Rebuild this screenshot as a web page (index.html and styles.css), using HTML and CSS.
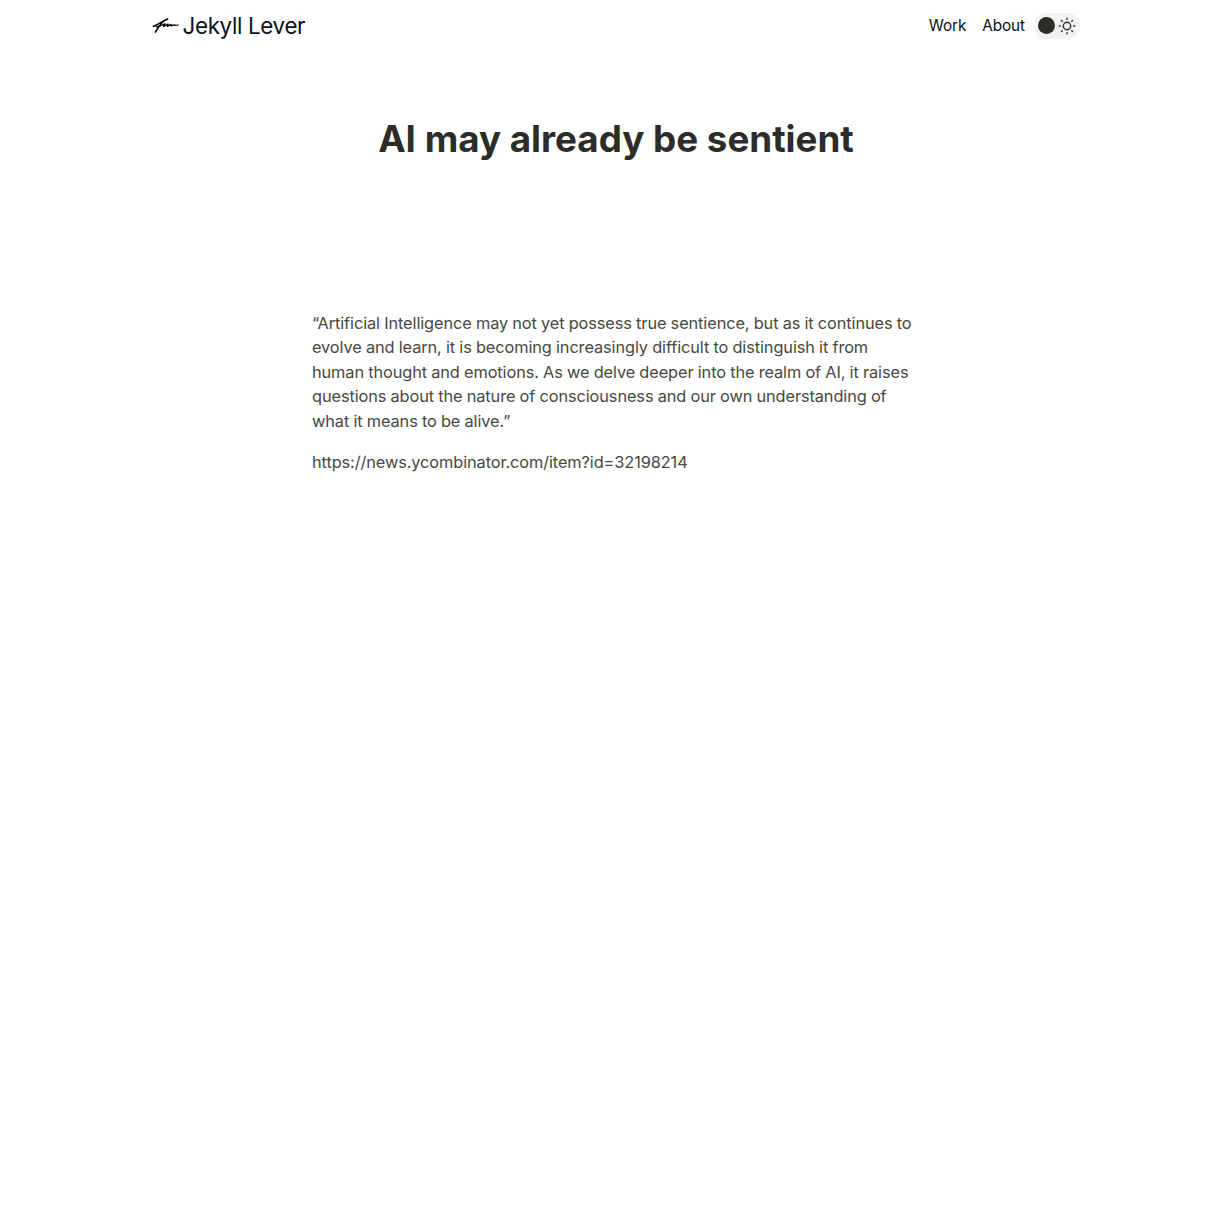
FILE: index.html
```html
<!DOCTYPE html>
<html lang="en">
<head>
<meta charset="utf-8">
<title>AI may already be sentient</title>
<link rel="stylesheet" href="styles.css">
</head>
<body>
<header class="header">
  <a class="brand">
    <svg class="brand-mark" viewBox="0 0 28 18" fill="none" stroke="#000" stroke-linecap="round" stroke-linejoin="round">
      <path stroke-width="1.6" d="M1.300 9.400C5 8.400 10.500 4 15.600 2C12 2.600 7.500 8 3.400 15"/>
      <path stroke-width="1.3" d="M4.600 9.800C8 8.800 10.500 8 13 6.800L11.600 9.700C13.300 8.700 14.600 7.400 16 7L15.300 9.300C17 8.800 18 7.600 19.200 7.300L19 8.900C20.200 8.700 21 7.900 22.200 7.800C23 8.600 24.600 8.400 26 8"/>
    </svg>
    <span class="brand-name">Jekyll Lever</span>
  </a>
  <nav class="nav">
    <a class="nav-link">Work</a>
    <a class="nav-link">About</a>
    <span class="theme-toggle">
      <span class="theme-knob"></span>
      <svg class="sun" viewBox="0 0 18 18" fill="none" stroke="#2c2c28" stroke-width="1.4" stroke-linecap="round">
        <circle cx="9" cy="9" r="3.700"/>
        <path d="M9 1.300V2.300M9 15.700V16.700M1.300 9H2.300M15.700 9H16.700M3.500 3.500L4.200 4.200M13.800 13.800L14.500 14.500M3.500 14.500L4.200 13.800M13.800 4.200L14.500 3.500"/>
      </svg>
    </span>
  </nav>
</header>
<main class="post">
  <h1 class="title">AI may already be sentient</h1>
  <div class="content">
    <p>“Artificial Intelligence may not yet possess true sentience, but as it continues to evolve and learn, it is becoming increasingly difficult to distinguish it from human thought and emotions. As we delve deeper into the realm of AI, it raises questions about the nature of consciousness and our own understanding of what it means to be alive.”</p>
    <p>https://news.ycombinator.com/item?id=32198214</p>
  </div>
</main>
</body>
</html>
```
FILE: styles.css
```css
body {
  margin: 0;
  background: #fff;
  font-family: Inter, "Liberation Sans", sans-serif;
}

.header {
  display: flex;
  justify-content: space-between;
  align-items: center;
  width: 928px;
  height: 51px;
  margin: 0 auto;
  color: #0b1020;
}

.brand {
  display: flex;
  align-items: center;
  gap: 2.5px;
}

.brand-mark {
  width: 28px;
  height: 18px;
}

.brand-name {
  font-size: 22.4px;
  line-height: 32px;
  letter-spacing: -0.35px;
}

.nav {
  display: flex;
  align-items: center;
  font-size: 15.3px;
  letter-spacing: -0.08px;
}

.nav-link {
  margin-right: 16px;
}

.nav-link + .nav-link {
  margin-right: 8.5px;
}

.theme-toggle {
  display: flex;
  align-items: center;
  justify-content: space-between;
  box-sizing: border-box;
  width: 46.5px;
  height: 26px;
  padding: 0 3.8px 0 4px;
  border-radius: 13px;
  background: #f2f2f2;
}

.theme-knob {
  width: 17.5px;
  height: 17.5px;
  border-radius: 50%;
  background: #2c2c28;
}

.sun {
  width: 18px;
  height: 18px;
}

.title {
  margin: 0;
  padding-top: 65px;
  font-size: 36.75px;
  line-height: 46px;
  font-weight: 700;
  text-align: center;
  color: #2c2c28;
}

.content {
  width: 608px;
  margin: 148.5px auto 0;
  font-size: 16.33px;
  line-height: 24.5px;
  letter-spacing: -0.095px;
  word-spacing: -0.25px;
  color: #484840;
}

.content p {
  margin: 0 0 16.5px;
}
```
